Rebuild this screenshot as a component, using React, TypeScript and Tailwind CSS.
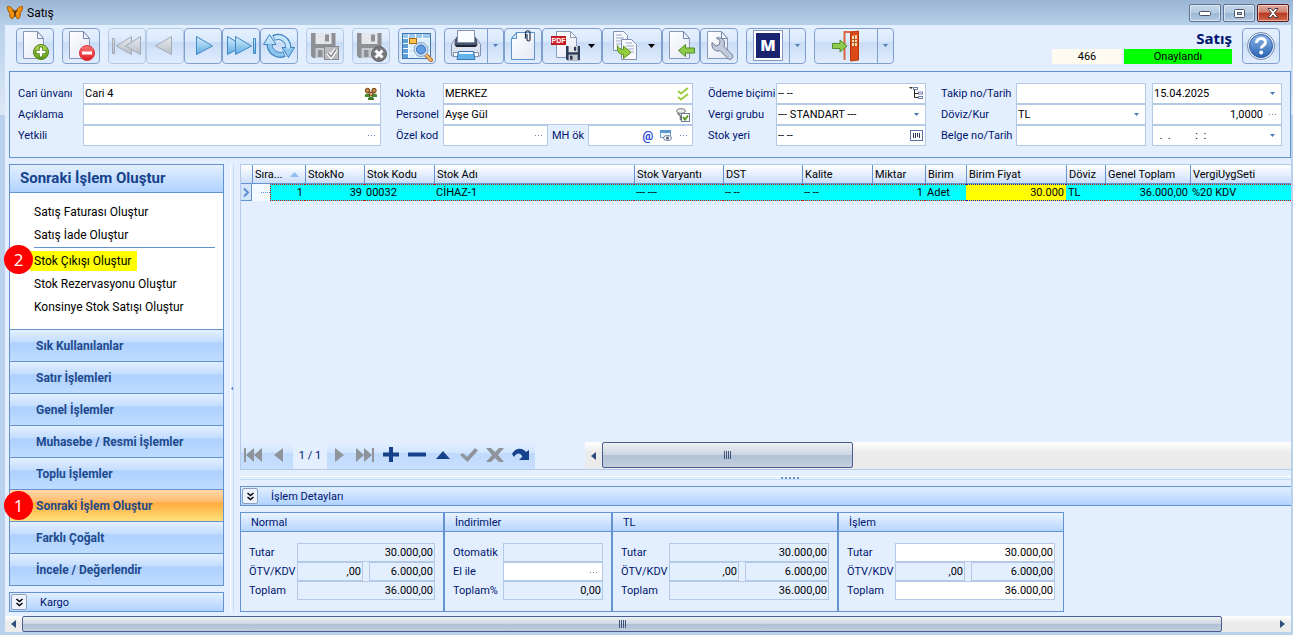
import React from 'react';
import clsx from 'clsx';

/* ---------- toolbar icons ---------- */

const Svg = ({ w = 32, children }: { w?: number; children: React.ReactNode }) => (
  <svg width={w} height={32} viewBox={`0 0 ${w} 32`} fill="none" className="shrink-0" aria-hidden="true">
    {children}
  </svg>
);

const Defs = () => (
  <svg width="0" height="0" className="absolute" aria-hidden="true">
    <defs>
      <linearGradient id="page" x1="0" y1="0" x2="1" y2="1">
        <stop offset="0" stopColor="#ffffff" />
        <stop offset="1" stopColor="#e4e8f4" />
      </linearGradient>
      <linearGradient id="blue" x1="0" y1="0" x2="0" y2="1">
        <stop offset="0" stopColor="#d6efff" />
        <stop offset="1" stopColor="#5fa9e0" />
      </linearGradient>
      <linearGradient id="gray" x1="0" y1="0" x2="0" y2="1">
        <stop offset="0" stopColor="#e6e9ee" />
        <stop offset="1" stopColor="#b9bfc8" />
      </linearGradient>
      <linearGradient id="green" x1="0" y1="0" x2="0" y2="1">
        <stop offset="0" stopColor="#b9dc5c" />
        <stop offset="1" stopColor="#5c9a10" />
      </linearGradient>
      <linearGradient id="red" x1="0" y1="0" x2="0" y2="1">
        <stop offset="0" stopColor="#ff7a7a" />
        <stop offset="1" stopColor="#e01c24" />
      </linearGradient>
      <linearGradient id="help" x1="0" y1="0" x2="0" y2="1">
        <stop offset="0" stopColor="#8fb8ea" />
        <stop offset="1" stopColor="#2a62b4" />
      </linearGradient>
    </defs>
  </svg>
);

const Page = () => (
  <>
    <path d="M4.5 1.5h14l6 7v20h-20z" fill="url(#page)" stroke="#8a98b8" />
    <path d="M18.5 1.5v7h6z" fill="#f4f7fd" stroke="#7688b0" />
  </>
);

const AddIcon = () => (
  <Svg>
    <Page />
    <circle cx="22" cy="22" r="7.5" fill="url(#green)" stroke="#4e8010" />
    <path d="M22 16.5v11M16.500 22h11" stroke="#4b8010" strokeWidth="4" />
    <path d="M22 17.5v9M17.500 22h9" stroke="#fff" strokeWidth="2.5" />
  </Svg>
);

const RemoveIcon = () => (
  <Svg>
    <Page />
    <circle cx="22" cy="23" r="7.5" fill="url(#red)" stroke="#d8303a" />
    <rect x="17" y="21.5" width="10" height="3" fill="#fff" />
  </Svg>
);

const FirstIcon = () => (
  <Svg>
    <path d="M1.5 8.5h2v15h-2z" fill="url(#gray)" stroke="#a3aab6" />
    <path d="M20.5 6.5v18L5.500 16z" fill="url(#gray)" stroke="#a3aab6" />
    <path d="M29.5 6.5v18L14.500 16z" fill="url(#gray)" stroke="#a3aab6" />
  </Svg>
);

const PrevIcon = () => (
  <Svg>
    <path d="M22.5 6.5v18L6.500 16z" fill="url(#gray)" stroke="#a3aab6" />
  </Svg>
);

const NextIcon = () => (
  <Svg>
    <path d="M9.5 6.5v18L25.500 16z" fill="url(#blue)" stroke="#4087c4" />
  </Svg>
);

const LastIcon = () => (
  <Svg>
    <path d="M2.5 6.5v18L18.500 16z" fill="url(#blue)" stroke="#4087c4" />
    <path d="M10.5 6.5v18L26.500 16z" fill="url(#blue)" stroke="#4087c4" />
    <path d="M28.5 8.5h2v15h-2z" fill="url(#blue)" stroke="#4087c4" />
  </Svg>
);

const RefreshIcon = () => (
  <Svg>
    <path d="M6.5 14c0 7 7 13.5 15 10" stroke="#3f83bf" strokeWidth="6" />
    <path d="M25.500 18C25.500 10 18 4.500 10.500 8" stroke="#3f83bf" strokeWidth="6" />
    <path d="M.5 14.500L6.500 4.500l6.500 10z" fill="#bfe2f8" stroke="#3f83bf" />
    <path d="M19 17.500h12.500l-6 10z" fill="#8cc6ee" stroke="#3f83bf" />
    <path d="M6.700 13.500c0 7 6.800 13.500 14 10.500" stroke="#8cc6ee" strokeWidth="4" />
    <path d="M25.300 18.500C25.300 10 18 5 11.300 8" stroke="#c5e6fa" strokeWidth="4" />
  </Svg>
);

const Floppy = ({ x = 2, y = 3, s = 1, body = '#8e9095' }: { x?: number; y?: number; s?: number; body?: string }) => (
  <g transform={`translate(${x} ${y}) scale(${s})`}>
    <path d="M0 0h24.5v25H2L0 23z" fill={body} />
    <path d="M4.5 0h16v11h-16z" fill="#e4e6ea" />
    <path d="M14 1.5h4v7h-4z" fill={body} />
    <path d="M4.5 15h16v10h-16z" fill="#c6c9cf" />
    <path d="M7 17h4.5v7H7z" fill={body} />
  </g>
);

const SaveCheckIcon = () => (
  <Svg>
    <Floppy />
    <rect x="15.5" y="16.5" width="14" height="13" fill="#b9bbbf" stroke="#85878c" />
    <path d="M19 23l3 3.5 5-7" stroke="#fff" strokeWidth="4" />
    <path d="M19 23l3 3.5 5-7" stroke="#85878c" strokeWidth="1.5" />
  </Svg>
);

const SaveCancelIcon = () => (
  <Svg>
    <Floppy />
    <circle cx="24" cy="24" r="7.5" fill="#77797d" stroke="#626468" />
    <path d="M20.500 20.500l7 7m0-7l-7 7" stroke="#fff" strokeWidth="3" />
  </Svg>
);

const GridSearchIcon = () => (
  <Svg>
    <rect x="1.5" y="3.5" width="28" height="25" fill="#d8ecfb" stroke="#3f76b0" />
    <path d="M2 4h27v4H2z" fill="#9cc8ec" />
    <path d="M2 8h5v20H2z" fill="#5c9fd8" />
    <path d="M7.5 4v24M14.500 4v24M21.500 4v24M2 8.500h27M2 13.500h27M2 18.500h27M2 23.500h27" stroke="#f4faff" />
    <rect x="8.5" y="8.5" width="7" height="5" fill="#ffc24a" stroke="#a86a14" />
    <path d="M25 25l5 5" stroke="#b8742c" strokeWidth="4" strokeLinecap="round" />
    <path d="M25 25l5 5" stroke="#f2b878" strokeWidth="2" strokeLinecap="round" />
    <circle cx="20" cy="19.5" r="7" fill="#c9e2f8" stroke="#8f9fc0" />
    <circle cx="20" cy="19.5" r="4.5" fill="#5f9ee0" stroke="#3a6cb4" />
  </Svg>
);

const PrintIcon = () => (
  <Svg>
    <path d="M4.500 9.500h23l3 5v11l-2 1h-25l-2-1v-11z" fill="#dde3ee" stroke="#7e8cab" />
    <path d="M7 6.500c-1.500 1.500-2.500 4-2.500 8.500l2 2h19l2-2c0-4.500-1-7-2.500-8.500z" fill="#4a556e" />
    <path d="M7.500.5h17v12h-17z" fill="#fbfcff" stroke="#8290ac" />
    <path d="M5 15h22l-1.500 2h-19z" fill="#1d2536" />
    <path d="M3.500 22.500h25v4h-25z" fill="#f4f7fc" stroke="#8290ac" />
    <path d="M8.500 21.500h15l1.500 8H7z" fill="#62b2ec" stroke="#3b78b4" />
    <path d="M9 22h14v2H9z" fill="#eaf5ff" />
  </Svg>
);

const NoteIcon = () => (
  <Svg>
    <path d="M9.500 2.500h18v27h-23v-21z" fill="url(#page)" stroke="#5b93cf" />
    <path d="M9.500 2.500v6h-5z" fill="#d5e6f8" stroke="#5b93cf" />
    <path d="M18.500 8.500V3a2.200 2.200 0 014.500 0v6.500a1.500 1.500 0 01-3 0V4" stroke="#1f3352" strokeWidth="1.2" />
  </Svg>
);

const PdfIcon = () => (
  <Svg>
    <path d="M6.500 1.500h14l6 6v20h-20z" fill="url(#page)" stroke="#8a98b8" />
    <path d="M20.500 1.500v6h6z" fill="#fff" stroke="#8a98b8" />
    <rect x="1.500" y="6.500" width="14" height="8" fill="#d3222a" stroke="#b8141c" />
    <text x="8.500" y="13" textAnchor="middle" fontSize="7" fontWeight="700" fontFamily="Liberation Sans, sans-serif" fill="#fff">PDF</text>
    <Floppy x={16} y={16} s={0.57} body="#2b3a56" />
  </Svg>
);

const CopyIcon = () => (
  <Svg>
    <path d="M3.500 1.500h10l4 4v15h-14z" fill="#f7f9fe" stroke="#8290b4" />
    <path d="M6 5h6M6 8h8M6 11h8M6 14h5" stroke="#9aa6c2" />
    <path d="M11.500 9.500h10l5 5v15h-15z" fill="#f7f9fe" stroke="#8290b4" />
    <path d="M16 13h6M16 16h8M18 19h6M20 22h4" stroke="#9aa6c2" />
    <path d="M7.500 15.500c1 2.500 3 4 6 4V16l7.500 6.500-7.500 6v-4c-4.500 0-7-3.500-6-9z" fill="#93cc3c" stroke="#5c9020" />
  </Svg>
);

const ImportIcon = () => (
  <Svg>
    <Page />
    <path d="M13.500 20.500l7-6v3.500h9v5h-9v3.500z" fill="#8fca4c" stroke="#4f8f28" />
  </Svg>
);

const WrenchIcon = () => (
  <Svg>
    <Page />
    <path
      d="M9 12.500l4 3.500 3.500-1.500.5-4-3.500-2.500c4-1 8 1 8 5l-.5 3.500 8.500 8.500c1.500 2.500-2 5.500-4 4L17 20.500c-4 2-9-1.500-8-8z"
      fill="#c3ccdc"
      stroke="#6a7896"
    />
  </Svg>
);

const MIcon = () => (
  <Svg>
    <rect x="1.500" y=".5" width="29" height="30" fill="#fff" stroke="#8396bd" />
    <rect x="4" y="3" width="24" height="25" fill="#1a2370" />
    <text x="16" y="21" textAnchor="middle" fontSize="16" fontWeight="800" fontFamily="Open Sans, sans-serif" fill="#fff">M</text>
  </Svg>
);

const ExitIcon = () => (
  <Svg>
    <path d="M14.500 30V2h14" stroke="#d9663a" strokeWidth="2" />
    <path d="M20.500 2.500l8-1.500v29l-8 1z" fill="#dc4a17" stroke="#b8380c" />
    <path d="M22 6l5-1v11h-5z" fill="#f7d9b0" />
    <path d="M24.500 6v10M22 9.500h5M22 12.500h5" stroke="#b4571f" />
    <path d="M17 16l-7-6v3.500H2.500v5H10V22z" fill="#8fca4c" stroke="#4f8f28" />
  </Svg>
);

const HelpIcon = () => (
  <Svg>
    <circle cx="16" cy="16" r="13.5" fill="#eef4fc" stroke="#7387ad" />
    <circle cx="16" cy="16" r="11.5" fill="url(#help)" stroke="#2b5fae" />
    <path d="M11.500 13c0-6 9-6 9-.8 0 3.300-4.300 3.300-4.300 6.300" stroke="#fff" strokeWidth="3" />
    <circle cx="16.200" cy="22.500" r="2" fill="#fff" />
  </Svg>
);

const ButterflyIcon = () => (
  <svg width="16" height="16" viewBox="0 0 16 16" aria-hidden="true">
    <path d="M7.500 7C6 3 3 1 .5 1.500c0 4 1 5.500 2.500 6.500-1 1.500 0 5 2 6 1.500-.5 2.500-3.500 2.500-5z" fill="#f0920e" stroke="#a85a08" />
    <path d="M8.500 7C10 3 13 1 15.500 1.500c0 4-1 5.500-2.500 6.500 1 1.500 0 5-2 6-1.500-.5-2.500-3.500-2.500-5z" fill="#f0920e" stroke="#a85a08" />
    <path d="M8 5v7M5.500 5L8 8l2.500-3" stroke="#4a2604" fill="none" />
  </svg>
);

const Down = ({ dark = false }: { dark?: boolean }) => (
  <svg width="7" height="4" viewBox="0 0 7 4" className="shrink-0" aria-hidden="true">
    <path d={dark ? 'M0 0h7L3.500 4z' : 'M1 0h5L3.500 3z'} fill={dark ? '#000' : '#4a7ab5'} />
  </svg>
);

/* ---------- toolbar ---------- */

const BTN =
  'flex h-9 items-center justify-center rounded-sm border bg-[linear-gradient(#e6f1ff_0%,#d8e8fc_38%,#c9dcf6_40%,#e0edff_100%)]';

interface ToolButtonProps {
  label: string;
  icon: React.ReactNode;
  disabled?: boolean;
  className?: string;
}

const ToolButton: React.FC<ToolButtonProps> = ({ label, icon, disabled, className = 'w-[38px]' }) => (
  <button type="button" aria-label={label} disabled={disabled} className={clsx(BTN, className, disabled ? 'border-[#b5c9e5]' : 'border-[#7f9fcd]')}>
    {icon}
  </button>
);

const SplitButton: React.FC<ToolButtonProps> = ({ label, icon, className }) => (
  <div className="flex">
    <button type="button" aria-label={label} className={clsx(BTN, className, 'rounded-r-none border-[#7f9fcd]')}>
      {icon}
    </button>
    <button type="button" aria-label={`${label} seçenekleri`} className={clsx(BTN, '-ml-px w-[17px] rounded-l-none border-[#7f9fcd]')}>
      <Down />
    </button>
  </div>
);

const MenuButton: React.FC<ToolButtonProps> = ({ label, icon }) => (
  <button type="button" aria-label={label} className={clsx(BTN, 'w-[60px] gap-[6px] border-[#7f9fcd]')}>
    {icon}
    <Down dark />
  </button>
);

const Toolbar = () => (
  <div className="flex h-[46px] items-start justify-between pt-[3px] pr-[11px] pl-[11px]">
    <div className="flex gap-2">
      <ToolButton label="Yeni" icon={<AddIcon />} />
      <ToolButton label="Sil" icon={<RemoveIcon />} />
      <div className="flex">
        <ToolButton label="İlk" icon={<FirstIcon />} disabled />
        <ToolButton label="Önceki" icon={<PrevIcon />} disabled />
        <ToolButton label="Sonraki" icon={<NextIcon />} />
        <ToolButton label="Son" icon={<LastIcon />} />
        <ToolButton label="Yenile" icon={<RefreshIcon />} />
      </div>
      <ToolButton label="Kaydet" icon={<SaveCheckIcon />} disabled />
      <ToolButton label="Vazgeç" icon={<SaveCancelIcon />} disabled />
      <ToolButton label="Liste" icon={<GridSearchIcon />} />
      <div className="flex">
        <SplitButton label="Yazdır" icon={<PrintIcon />} className="w-[44px]" />
        <ToolButton label="Not" icon={<NoteIcon />} />
        <MenuButton label="PDF kaydet" icon={<PdfIcon />} />
        <MenuButton label="Kopyala" icon={<CopyIcon />} />
        <ToolButton label="İçeri al" icon={<ImportIcon />} />
        <ToolButton label="Ayarlar" icon={<WrenchIcon />} />
      </div>
      <SplitButton label="Modül" icon={<MIcon />} className="w-[44px]" />
      <SplitButton label="Çıkış" icon={<ExitIcon />} className="w-[64px]" />
    </div>
    <div className="flex gap-[10px]">
      <div className="flex flex-col items-end">
        <h1 className="h-[21px] font-['Noto_Sans'] text-[15px] leading-[21px] font-bold text-[#00156e]">Satış</h1>
        <div className="flex gap-0.5 text-center leading-4 text-black">
          <output className="h-[15px] w-[70px] bg-[#fffbf0]">466</output>
          <output className="h-[15px] w-[108px] bg-[#00ff00]">Onaylandı</output>
        </div>
      </div>
      <ToolButton label="Yardım" icon={<HelpIcon />} />
    </div>
  </div>
);

/* ---------- header form ---------- */

const Dots = ({ label }: { label: string }) => (
  <button type="button" aria-label={label} className="flex w-[17px] shrink-0 justify-center gap-0.5 self-stretch pt-[9px]">
    <i className="size-px bg-[#6a84ac]" />
    <i className="size-px bg-[#6a84ac]" />
    <i className="size-px bg-[#6a84ac]" />
  </button>
);

const PeopleIcon = () => (
  <svg width="14" height="13" viewBox="0 0 14 13" aria-hidden="true">
    <path d="M1 8c0-2 5-2 5 0v2H1zM8 8c0-2 5-2 5 0v2H8z" fill="#4d8a34" />
    <path d="M4 12c0-3 6-3 6 0v1H4z" fill="#3c7c28" />
    <circle cx="3.5" cy="3.5" r="2.2" fill="#c98a4a" stroke="#6a3a10" />
    <circle cx="10" cy="3.5" r="2.2" fill="#c98a4a" stroke="#6a3a10" />
    <circle cx="7" cy="7" r="2" fill="#e0a86a" stroke="#6a3a10" />
  </svg>
);

const ChecksIcon = () => (
  <svg width="12" height="14" viewBox="0 0 12 14" fill="none" stroke="#9ccc3c" strokeWidth="2" aria-hidden="true">
    <path d="M1 4l3 2.500L11 1M1 10l3 2.500L11 7" />
  </svg>
);

const PersonIcon = () => (
  <svg width="14" height="14" viewBox="0 0 14 14" fill="none" aria-hidden="true">
    <ellipse cx="5" cy="3" rx="4.3" ry="2.3" fill="#eceef2" stroke="#777" />
    <path d="M1.500 5l3 3v3.500l2 .5" stroke="#777" strokeWidth="1.5" />
    <rect x="5.500" y="5.500" width="8" height="8" fill="#fff" stroke="#6b7896" />
    <path d="M7 9l2 2.500 3-4" stroke="#5c9c1c" strokeWidth="2" />
  </svg>
);

const PreviewIcon = () => (
  <svg width="12" height="11" viewBox="0 0 12 11" fill="none" aria-hidden="true">
    <rect x=".5" y=".5" width="10" height="7" fill="#eef5fd" stroke="#6fa0d0" />
    <path d="M0 0h11v3H0z" fill="#5b97d2" />
    <ellipse cx="7.500" cy="8" rx="4" ry="2.5" fill="#fff" stroke="#6b7896" />
    <circle cx="7.500" cy="8" r="1.5" fill="#4a5a7c" />
  </svg>
);

const TreeIcon = () => (
  <svg width="14" height="13" viewBox="0 0 14 13" fill="none" aria-hidden="true">
    <path d="M0 0h4L2 2z" fill="#333" />
    <path d="M5.500 2v8.500H9M5.500 6.500H9" stroke="#222" />
    <rect x="4.500" y=".5" width="4" height="2" fill="#fff" stroke="#7180a8" />
    <rect x="9.500" y="5" width="4" height="2" fill="#fff" stroke="#7180a8" />
    <rect x="9.500" y="9.500" width="4" height="2" fill="#fff" stroke="#7180a8" />
  </svg>
);

const BarcodeIcon = () => (
  <svg width="13" height="11" viewBox="0 0 13 11" fill="none" aria-hidden="true">
    <rect x=".5" y=".5" width="12" height="10" fill="#fff" stroke="#5b6fa8" />
    <path d="M3.500 3v5M5.500 3v5M7.500 3v4M9.500 3v5" stroke="#28345c" />
  </svg>
);

interface FieldProps {
  id: string;
  value?: string;
  label?: string;
  align?: 'left' | 'right';
  children?: React.ReactNode;
  className?: string;
}

const Field: React.FC<FieldProps> = ({ id, value = '', label, align = 'left', children, className }) => (
  <div className={clsx('flex h-[21px] min-w-0 items-center border border-[#b3c9e6] bg-white', className)}>
    <input
      id={id}
      aria-label={label}
      defaultValue={value}
      className={clsx('w-full min-w-0 flex-1 bg-transparent px-px text-black outline-none', align === 'right' && 'text-right')}
    />
    {children}
  </div>
);

const SelectField: React.FC<FieldProps> = ({ id, value = '', label }) => (
  <div className="relative h-[21px] min-w-0 border border-[#b3c9e6] bg-white">
    <select id={id} aria-label={label} className="block h-full w-full appearance-none bg-transparent px-px text-black outline-none">
      <option>{value}</option>
    </select>
    <span className="pointer-events-none absolute top-2 right-[5px]">
      <Down />
    </span>
  </div>
);

const Label = ({ htmlFor, first, children }: { htmlFor: string; first?: boolean; children: React.ReactNode }) => (
  <label htmlFor={htmlFor} className={clsx('self-center whitespace-nowrap', !first && 'pl-[15px]')}>
    {children}
  </label>
);

const IconButton = ({ label, children }: { label: string; children: React.ReactNode }) => (
  <button type="button" aria-label={label} className="flex w-[18px] shrink-0 items-center justify-center">
    {children}
  </button>
);

const HeaderForm = () => (
  <form className="ml-1 grid grid-cols-[65px_298fr_62px_250fr_83px_150fr_90px_130fr_6px_130fr] border border-[#6593cf] pt-[11px] pr-2 pb-[11px] pl-2">
    <Label htmlFor="cari" first>Cari ünvanı</Label>
    <Field id="cari" value="Cari 4">
      <IconButton label="Cari seç"><PeopleIcon /></IconButton>
    </Field>
    <Label htmlFor="nokta">Nokta</Label>
    <Field id="nokta" value="MERKEZ">
      <IconButton label="Nokta seç"><ChecksIcon /></IconButton>
    </Field>
    <Label htmlFor="odeme">Ödeme biçimi</Label>
    <Field id="odeme" value="-- --">
      <IconButton label="Ödeme biçimi seç"><TreeIcon /></IconButton>
    </Field>
    <Label htmlFor="takip">Takip no/Tarih</Label>
    <Field id="takip" />
    <span />
    <SelectField id="tarih" label="Takip tarihi" value="15.04.2025" />

    <Label htmlFor="aciklama" first>Açıklama</Label>
    <Field id="aciklama" />
    <Label htmlFor="personel">Personel</Label>
    <Field id="personel" value="Ayşe Gül">
      <IconButton label="Personel seç"><PersonIcon /></IconButton>
    </Field>
    <Label htmlFor="vergi">Vergi grubu</Label>
    <SelectField id="vergi" value="--- STANDART ---" />
    <Label htmlFor="doviz">Döviz/Kur</Label>
    <SelectField id="doviz" value="TL" />
    <span />
    <Field id="kur" label="Kur" value="1,0000" align="right">
      <Dots label="Kur seç" />
    </Field>

    <Label htmlFor="yetkili" first>Yetkili</Label>
    <Field id="yetkili">
      <Dots label="Yetkili seç" />
    </Field>
    <Label htmlFor="ozel">Özel kod</Label>
    <div className="flex min-w-0">
      <Field id="ozel" className="flex-1">
        <Dots label="Özel kod seç" />
      </Field>
      <label htmlFor="mhok" className="w-10 self-center text-center whitespace-nowrap">MH ök</label>
      <Field id="mhok" className="flex-1">
        <IconButton label="E-posta"><b className="text-[12px] leading-none text-[#2040e0]">@</b></IconButton>
        <IconButton label="Önizle"><PreviewIcon /></IconButton>
        <Dots label="MH ök seç" />
      </Field>
    </div>
    <Label htmlFor="stokyeri">Stok yeri</Label>
    <Field id="stokyeri" value="-- --">
      <IconButton label="Barkod"><BarcodeIcon /></IconButton>
    </Field>
    <Label htmlFor="belge">Belge no/Tarih</Label>
    <Field id="belge" />
    <span />
    <SelectField id="belgetarih" label="Belge tarihi" value={'\u00a0\u00a0.\u00a0\u00a0.\u00a0\u00a0\u00a0\u00a0\u00a0\u00a0\u00a0\u00a0\u00a0:\u00a0\u00a0:'} />
  </form>
);

/* ---------- sidebar ---------- */

const MENU = ['Sık Kullanılanlar', 'Satır İşlemleri', 'Genel İşlemler', 'Muhasebe / Resmi İşlemler', 'Toplu İşlemler', 'Sonraki İşlem Oluştur', 'Farklı Çoğalt', 'İncele / Değerlendir'];
const ACTIVE = 'Sonraki İşlem Oluştur';

const Step = ({ n, className }: { n: number; className: string }) => (
  <span className={clsx("absolute flex size-[29px] items-center justify-center rounded-full bg-[#fe0000] font-['Open_Sans'] text-[17px] text-white", className)}>
    {n}
  </span>
);

const Expander = ({ label }: { label: string }) => (
  <button type="button" aria-label={label} className="flex size-4 items-center justify-center rounded-xs border border-[#8ba0bf] bg-[#eef4fd]">
    <svg width="7" height="9" viewBox="0 0 7 9" fill="none" stroke="#000" strokeWidth="1.5" aria-hidden="true">
      <path d="M.5 1l3 2.500 3-2.500M.5 5l3 2.500 3-2.500" />
    </svg>
  </button>
);

const SideLink = ({ children, marked }: { children: string; marked?: boolean }) => (
  <li className="flex h-[23px] items-center">
    <a href="#" className={clsx('-ml-1 pr-[6px] pl-1 leading-5', marked && 'bg-[#ffff00]')}>{children}</a>
  </li>
);

const Sidebar = () => (
  <aside className="flex w-[215px] shrink-0 flex-col">
    <div className="flex flex-1 flex-col border border-[#6593cf] text-[12px]">
      <h2 className="h-7 border-b border-[#6593cf] bg-linear-to-b from-[#e3efff] to-[#afd2ff] pl-[10px] text-[15px] leading-[27px] font-bold text-[#15428b]">
        Sonraki İşlem Oluştur
      </h2>
      <ul className="relative flex-1 bg-white pt-[7px] pr-2 pl-6 text-black">
        <SideLink>Satış Faturası Oluştur</SideLink>
        <SideLink>Satış İade Oluştur</SideLink>
        <li className="mt-px mb-px h-px bg-[#6593cf]" />
        <SideLink marked>Stok Çıkışı Oluştur</SideLink>
        <SideLink>Stok Rezervasyonu Oluştur</SideLink>
        <SideLink>Konsinye Stok Satışı Oluştur</SideLink>
        <Step n={2} className="top-[52px] -left-[6px]" />
      </ul>
      {MENU.map(item => (
        <div key={item} className="relative border-t border-[#6593cf]">
          <button
            type="button"
            className={clsx(
              'block h-[31px] w-full pt-0.5 pl-[26px] text-left font-bold text-[#1f4a8c]',
              item === ACTIVE
                ? 'bg-[linear-gradient(#ffd9aa_0%,#ffbb6e_38%,#ffab3f_42%,#fee17a_100%)]'
                : 'bg-[linear-gradient(#e3efff_0%,#c4ddff_38%,#add1ff_42%,#c0dbff_100%)]'
            )}
          >
            {item}
          </button>
          {item === ACTIVE && <Step n={1} className="top-px -left-[6px]" />}
        </div>
      ))}
    </div>
    <div className="mt-[6px] flex h-5 items-center gap-[13px] border border-[#6593cf] bg-linear-to-b from-[#e3efff] to-[#afd2ff] pl-px">
      <Expander label="Kargo aç" />
      Kargo
    </div>
  </aside>
);

/* ---------- grid ---------- */

interface Column {
  title: string;
  width: string;
  value: string;
  right?: boolean;
}

const COLUMNS: Column[] = [
  { title: 'StokNo', width: 'w-[59px]', value: '39', right: true },
  { title: 'Stok Kodu', width: 'w-[70px]', value: '00032' },
  { title: 'Stok Adı', width: 'w-[200px]', value: 'CİHAZ-1' },
  { title: 'Stok Varyantı', width: 'w-[89px]', value: '--- ---' },
  { title: 'DST', width: 'w-[79px]', value: '-- --' },
  { title: 'Kalite', width: 'w-[70px]', value: '-- --' },
  { title: 'Miktar', width: 'w-[53px]', value: '1', right: true },
  { title: 'Birim', width: 'w-[41px]', value: 'Adet' },
  { title: 'Birim Fiyat', width: 'w-[100px]', value: '30.000', right: true },
  { title: 'Döviz', width: 'w-[39px]', value: 'TL' },
  { title: 'Genel Toplam', width: 'w-[85px]', value: '36.000,00', right: true },
  { title: 'VergiUygSeti', width: '', value: '%20 KDV' },
];

const StockTable = () => (
  <table className="w-full table-fixed border-separate border-spacing-0 text-black">
    <thead>
      <tr className="h-[19px] bg-linear-to-b from-white to-[#c8dcfa] text-left [&>th]:border-b [&>th]:border-[#6593cf] [&>th]:p-0 [&>th]:font-normal">
        <th className="w-[11px]" />
        <th className="w-[53px] border-l">
          <span className="flex items-center justify-between pr-[6px] pl-0.5">
            Sıra...
            <svg width="9" height="5" viewBox="0 0 9 5" aria-hidden="true"><path d="M4.500 0L9 5H0z" fill="#8fbcf3" /></svg>
          </span>
        </th>
        {COLUMNS.map(c => (
          <th key={c.title} className={clsx('overflow-hidden border-l whitespace-nowrap', c.width)}>
            <span className="pl-0.5">{c.title}</span>
          </th>
        ))}
      </tr>
    </thead>
    <tbody>
      <tr className="h-[17px] leading-[15px] [&>td]:p-0">
        <td className="border-r border-b border-[#6593cf] bg-[#d3e4fb]">
          <svg width="10" height="11" viewBox="0 0 10 11" fill="none" aria-hidden="true">
            <path d="M3 1.500l4 4-4 4" stroke="#5b8fd4" strokeWidth="2" />
          </svg>
        </td>
        <td className="bg-[#f4f9ff]">
          <div className="flex items-center">
            <span className="w-[18px] pl-[9px]"><i className="block border-t border-dotted border-[#6593cf]" /></span>
            <span className="flex-1 border-y border-l border-dotted border-[#e00000] bg-[#00ffff] pr-0.5 text-right">1</span>
          </div>
        </td>
        {COLUMNS.map(c => (
          <td
            key={c.title}
            className={clsx(
              'border-y border-dotted whitespace-nowrap',
              c.title === 'Birim Fiyat' ? 'border-[#0000e0] bg-[#ffff00]' : 'border-[#e00000] bg-[#00ffff]',
              c.right ? 'text-right' : 'text-left'
            )}
          >
            <span className={c.right ? 'pr-0.5' : 'pl-0.5'}>{c.value}</span>
          </td>
        ))}
      </tr>
    </tbody>
  </table>
);

const NAV: { label: string; d: string; on?: boolean }[] = [
  { label: 'İlk kayıt', d: 'M0 1h2v14H0zM2 8l8-7v14zM10 8l8-7v14z' },
  { label: 'Önceki kayıt', d: 'M4 8l9-7v14z' },
  { label: 'Sonraki kayıt', d: 'M14 8L5 1v14z' },
  { label: 'Son kayıt', d: 'M18 1h-2v14h2zM16 8L8 1v14zM8 8L0 1v14z' },
  { label: 'Ekle', d: 'M7 0h4v5.500h6v4h-6V15H7V9.500H1v-4h6z', on: true },
  { label: 'Çıkar', d: 'M0 5.500h18v4H0z', on: true },
  { label: 'Düzenle', d: 'M2 12h14L9 4z', on: true },
  { label: 'Onayla', d: 'M0 8l3-2 4 4 8-9 3 2.500L7.500 15z' },
  { label: 'İptal', d: 'M0 1h5l4 4 4-4h5l-6 7 6 7h-5l-4-4-4 4H0l6-7z' },
  { label: 'Tazele', d: 'M0 7c3-6 10-7 14-2l3-2v10H7l3.500-3.500C8 5.500 5 5.500 2 10z', on: true },
];

const NavButtons = ({ items }: { items: typeof NAV }) => (
  <div className="flex bg-[linear-gradient(#e3efff_0%,#d2e5ff_40%,#bfdafd_42%,#c8dffe_100%)]">
    {items.map(n => (
      <button key={n.label} type="button" aria-label={n.label} className="flex w-[26px] items-center justify-center pr-0.5 pb-0.5">
        <svg width="18" height="16" viewBox="0 0 18 16" fill={n.on ? '#15428b' : '#8f949b'} aria-hidden="true">
          <path d={n.d} />
        </svg>
      </button>
    ))}
  </div>
);

const Grip = () => (
  <span className="flex gap-px">
    {[0, 1, 2, 3].map(i => <i key={i} className="h-2 w-px bg-[#3f5578]" />)}
  </span>
);

const ScrollArrow = ({ left }: { left?: boolean }) => (
  <button type="button" aria-label={left ? 'Sola kaydır' : 'Sağa kaydır'} className="flex w-[17px] shrink-0 items-center justify-center">
    <svg width="5" height="8" viewBox="0 0 5 8" aria-hidden="true"><path d={left ? 'M5 0v8L0 4z' : 'M0 0v8l5-4z'} fill="#2f4b7a" /></svg>
  </button>
);

const THUMB = 'flex items-center justify-center rounded-xs border border-[#4a5f8f] bg-[linear-gradient(#eef1f5_0%,#cdd6e2_48%,#b1c0d5_52%,#c3cfde_100%)]';

const Navigator = () => (
  <div className="flex h-7 items-stretch border-b border-[#b3c9e6]">
    <NavButtons items={NAV.slice(0, 2)} />
    <span className="flex w-[34px] items-center justify-center">1 / 1</span>
    <NavButtons items={NAV.slice(2)} />
    <div className="ml-[50px] flex flex-1 bg-linear-to-b from-white to-[#ebebeb] to-40%">
      <ScrollArrow left />
      <div className={clsx(THUMB, 'mb-px w-[251px]')}>
        <Grip />
      </div>
    </div>
  </div>
);

/* ---------- totals ---------- */

interface TotalsProps {
  title: string;
  width: string;
  labels: [string, string, string];
  labelWidth?: string;
  otvWidth?: string;
  values: [string, [string, string] | string, string];
  white?: number[];
}

const Cell = ({ value, white, label, className }: { value: string; white?: boolean; label: string; className?: string }) => (
  <input
    aria-label={label}
    defaultValue={value}
    className={clsx('h-[19px] min-w-0 border border-[#b3c9e6] px-px text-right text-black outline-none', white ? 'bg-white' : 'bg-[#e3efff]', className)}
  />
);

const Totals: React.FC<TotalsProps> = ({ title, width, labels, labelWidth = 'w-12', otvWidth = 'w-[70px]', values, white = [] }) => (
  <section aria-label={title} className={clsx('h-[100px] shrink-0 border border-[#6593cf]', width)}>
    <h3 className="h-[19px] border-b border-[#6593cf] bg-linear-to-b from-[#eaf3ff] to-[#b5d5ff] pl-[10px] leading-5">{title}</h3>
    <div className="pt-[11px] pr-2 pl-2">
      {values.map((v, i) => (
        <div key={labels[i]} className="flex items-center">
          <span className={clsx('shrink-0 whitespace-nowrap', labelWidth)}>{labels[i]}</span>
          {Array.isArray(v) ? (
            <div className="flex min-w-0 flex-1 gap-[6px]">
              <Cell label={`${title} ÖTV`} value={v[0]} className={otvWidth} />
              <Cell label={`${title} KDV`} value={v[1]} className="w-0 flex-1" />
            </div>
          ) : v === '...' ? (
            <div className="flex h-[19px] min-w-0 flex-1 border border-[#b3c9e6] bg-white">
              <input aria-label={`${title} ${labels[i]}`} className="w-0 min-w-0 flex-1 outline-none" />
              <Dots label="El ile seç" />
            </div>
          ) : (
            <Cell label={`${title} ${labels[i]}`} value={v} white={white.includes(i)} className="w-0 flex-1" />
          )}
        </div>
      ))}
    </div>
  </section>
);

const SUM: TotalsProps['values'] = ['30.000,00', [',00', '6.000,00'], '36.000,00'];
const SUM_LABELS: TotalsProps['labels'] = ['Tutar', 'ÖTV/KDV', 'Toplam'];

const Main = () => (
  <main className="flex min-w-0 flex-1 flex-col">
    <section className="flex flex-1 flex-col border-t border-l border-[#b3c9e6]">
      <StockTable />
      <div className="flex-1" />
      <Navigator />
    </section>
    <div className="flex h-4 items-center">
      <div className="flex h-1 flex-1 items-center justify-center gap-0.5 border-t border-b border-t-white border-b-[#c2dbfa] pl-12">
        {[0, 1, 2, 3, 4].map(i => <i key={i} className="size-0.5 bg-[#6593cf]" />)}
      </div>
    </div>
    <div className="flex h-5 items-center gap-[13px] border-y border-l border-[#6593cf] bg-linear-to-b from-[#e3efff] to-[#afd2ff] pl-px">
      <Expander label="Detayları aç" />
      İşlem Detayları
    </div>
    <div className="mt-[6px] flex">
      <Totals title="Normal" width="w-[204px]" labels={SUM_LABELS} values={SUM} otvWidth="w-[66px]" />
      <Totals title="İndirimler" width="w-[168px]" labels={['Otomatik', 'El ile', 'Toplam%']} labelWidth="w-[50px]" values={['', '...', '0,00']} />
      <Totals title="TL" width="w-[226px]" labels={SUM_LABELS} values={SUM} />
      <Totals title="İşlem" width="w-[226px]" labels={SUM_LABELS} values={SUM} white={[0, 2]} />
    </div>
  </main>
);

/* ---------- window ---------- */

const WIN_BTN = 'flex h-[18px] w-8 items-center justify-center rounded-xs border shadow-[inset_0_0_0_1px_rgba(255,255,255,0.5)]';
const WIN_BLUE = 'border-[#5d7391] bg-[linear-gradient(#c5d7ea_0%,#b4cae2_48%,#9cb8d5_52%,#b3cbe3_100%)]';

const TitleBar = () => (
  <header className="flex h-[25px] items-start justify-between pr-1 pl-[7px]">
    <div className="flex items-center gap-1 pt-[5px] text-[12px] leading-4 text-black">
      <ButterflyIcon />
      Satış
    </div>
    <div className="flex gap-0.5 pt-1">
      <button type="button" aria-label="Simge durumuna küçült" className={clsx(WIN_BTN, WIN_BLUE)}>
        <svg width="12" height="5" viewBox="0 0 12 5"><rect x=".5" y=".5" width="11" height="4" rx="1" fill="#fff" stroke="#4c5566" /></svg>
      </button>
      <button type="button" aria-label="Önceki boyut" className={clsx(WIN_BTN, WIN_BLUE)}>
        <svg width="11" height="9" viewBox="0 0 11 9"><rect x=".5" y=".5" width="10" height="8" rx="1" fill="#fff" stroke="#4c5566" /><rect x="3.500" y="3.500" width="4" height="2" fill="#b5c9df" stroke="#4c5566" /></svg>
      </button>
      <button type="button" aria-label="Kapat" className={clsx(WIN_BTN, 'border-[#5b1a1a] bg-[linear-gradient(#e0a99b_0%,#d08372_45%,#b8371f_50%,#d0694c_100%)]')}>
        <svg width="12" height="10" viewBox="0 0 12 10"><path d="M1 .5h3l2 2.500 2-2.500h3L7.500 5l3.500 4.500H8L6 7 4 9.500H1L4.500 5z" fill="#fff" stroke="#4c3a44" /></svg>
      </button>
    </div>
  </header>
);

export default function App() {
  return (
    <div className="flex min-h-screen flex-col bg-[linear-gradient(#9ab5d3_0px,#b7d0ea_25px,#dbe8f6_115px,#b9d1ea_115px)] font-[Roboto,'Noto_Sans',sans-serif] text-[11px] leading-[15px] text-[#00156e]">
      <Defs />
      <TitleBar />
      <div className="mr-0.5 ml-[5px] flex flex-1 flex-col bg-[#e3efff]">
        <Toolbar />
        <HeaderForm />
        <div className="mt-[6px] ml-1 flex flex-1">
          <Sidebar />
          <div className="flex w-4 items-center justify-center">
            <div className="flex h-full w-1 items-center border-l border-r border-l-white border-r-[#c2dbfa]">
              <svg width="3" height="5" viewBox="0 0 3 5" aria-hidden="true"><path d="M3 0v5L0 2.500z" fill="#4a7ab5" /></svg>
            </div>
          </div>
          <Main />
        </div>
        <div className="mt-1 flex h-4 bg-linear-to-b from-white to-[#ebebeb] to-40%">
          <ScrollArrow left />
          <div className={clsx(THUMB, 'w-[1200px]')}>
            <Grip />
          </div>
          <div className="flex-1" />
          <ScrollArrow />
        </div>
      </div>
      <div className="h-[3px]" />
    </div>
  );
}
